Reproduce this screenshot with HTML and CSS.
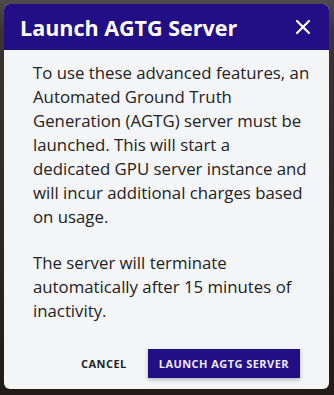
FILE: index.html
```html
<!DOCTYPE html>
<html lang="en">
<head>
    <meta charset="UTF-8">
    <meta name="viewport" content="width=device-width, initial-scale=1.0">
    <title>Launch AGTG Server</title>
    <link rel="stylesheet" href="styles.css">
</head>
<body>
    <div class="backdrop">
        <div class="dialog">
            <div class="dialog-header">
                <h2>Launch AGTG Server</h2>
                <button class="close" aria-label="Close">
                    <svg width="16" height="16" viewBox="0 0 16 16">
                        <path d="M2 2 L14 14 M14 2 L2 14" stroke="#fff" stroke-width="2.2" stroke-linecap="round"/>
                    </svg>
                </button>
            </div>
            <div class="dialog-body">
                <p>To use these advanced features, an Automated Ground Truth Generation (AGTG) server must be launched. This will start a dedicated GPU server instance and will incur additional charges based on usage.</p>
                <p>The server will terminate automatically after 15 minutes of inactivity.</p>
            </div>
            <div class="dialog-actions">
                <button class="btn btn-text">Cancel</button>
                <button class="btn btn-primary">Launch AGTG Server</button>
            </div>
        </div>
    </div>
</body>
</html>
```

FILE: styles.css
```css
html, body {
    margin: 0;
    height: 100%;
}
body {
    font-family: "Open Sans", "Noto Sans", sans-serif;
    background: linear-gradient(to bottom, #4d4b4a 0px, #3a3533 30px, #221b18 100%);
}
.backdrop {
    box-sizing: border-box;
    height: 100%;
    padding: 4px 5px 6px 4px;
}
.dialog {
    height: 100%;
    display: flex;
    flex-direction: column;
    background: #f4f5f7;
    border-radius: 6px;
    overflow: hidden;
}
.dialog-header {
    display: flex;
    align-items: center;
    justify-content: space-between;
    height: 46px;
    padding: 0 18px 0 16px;
    background: #220f86;
    color: #fff;
}
.dialog-header h2 {
    margin: 0;
    font-size: 21.5px;
    font-weight: 700;
}
.close {
    background: none;
    border: none;
    padding: 0;
    width: 16px;
    height: 16px;
    cursor: pointer;
}
.close svg {
    display: block;
}
.dialog-body {
    flex: 1;
    padding: 11px 18px 0 29px;
    color: #222;
    font-size: 16.8px;
    line-height: 24px;
}
.dialog-body p {
    margin: 0 0 22px;
}
.dialog-actions {
    display: flex;
    justify-content: flex-end;
    align-items: center;
    gap: 21px;
    padding: 0 29px 10px 0;
}
.btn {
    font-family: "Open Sans", "Noto Sans", sans-serif;
    font-size: 11px;
    font-weight: 700;
    text-transform: uppercase;
    letter-spacing: 0.45px;
    border: none;
    cursor: pointer;
}
.btn-text {
    background: none;
    color: #222;
    padding: 8px 0;
}
.btn-primary {
    background: #220f86;
    color: #eeeaf8;
    height: 29px;
    padding: 0 11px;
    box-shadow: 0 2px 4px rgba(0, 0, 0, 0.25);
}
```
